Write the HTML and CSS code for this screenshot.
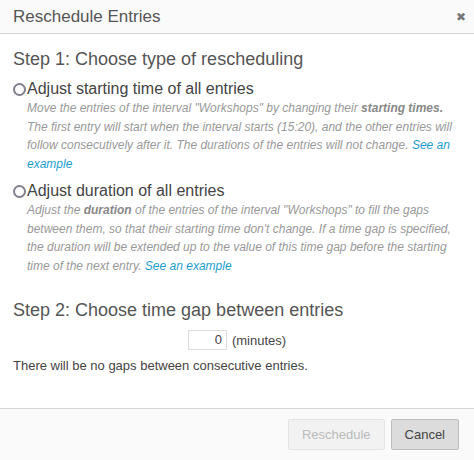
FILE: index.html
```html
<!DOCTYPE html>
<html>
<head>
<meta charset="utf-8">
<link rel="stylesheet" href="styles.css">
</head>
<body>
<div class="dialog">
  <div class="header">
    <span class="title">Reschedule Entries</span>
    <span class="close">✖</span>
  </div>
  <div class="content">
    <h2 class="step">Step 1: Choose type of rescheduling</h2>
    <div class="option">
      <label class="opt-label"><span class="radio"></span>Adjust starting time of all entries</label>
      <div class="desc">Move the entries of the interval "Workshops" by changing their <strong>starting times.</strong> The first entry will start when the interval starts (15:20), and the other entries will follow consecutively after it. The durations of the entries will not change. <a href="#">See an example</a></div>
    </div>
    <div class="option">
      <label class="opt-label"><span class="radio"></span>Adjust duration of all entries</label>
      <div class="desc">Adjust the <strong>duration</strong> of the entries of the interval "Workshops" to fill the gaps between them, so that their starting time don't change. If a time gap is specified, the duration will be extended up to the value of this time gap before the starting time of the next entry. <a href="#">See an example</a></div>
    </div>
    <h2 class="step step2">Step 2: Choose time gap between entries</h2>
    <div class="gap-row">
      <span class="gap-input">0</span>
      <span class="unit">(minutes)</span>
    </div>
    <p class="note">There will be no gaps between consecutive entries.</p>
  </div>
  <div class="footer">
    <button class="btn btn-disabled">Reschedule</button>
    <button class="btn btn-cancel">Cancel</button>
  </div>
</div>
</body>
</html>
```
FILE: styles.css
```css
html, body {
  margin: 0;
  padding: 0;
  background: #fff;
}
body {
  font-family: "Liberation Sans", Arial, sans-serif;
  color: #444;
}
.dialog {
  width: 474px;
  height: 460px;
  display: flex;
  flex-direction: column;
}
.header {
  height: 34px;
  box-sizing: border-box;
  border-bottom: 1px solid #d4d4d4;
  background: #fafafa;
  display: flex;
  align-items: center;
  justify-content: space-between;
  padding: 0 8px 0 13px;
}
.title {
  font-size: 17px;
  color: #555;
}
.close {
  font-size: 12px;
  color: #777;
}
.content {
  flex: 1;
  padding: 14px 13px 0 13px;
}
.step {
  font-size: 18px;
  font-weight: normal;
  color: #555;
  margin: 0 0 9px 0;
  line-height: 22px;
}
.step2 {
  margin-top: 24px;
}
.option {
  margin-bottom: 8px;
}
.opt-label {
  display: flex;
  align-items: center;
  font-size: 16px;
  color: #444;
  line-height: 20px;
}
.radio {
  width: 9px;
  height: 9px;
  border: 2px solid #80808e;
  border-radius: 50%;
  box-sizing: content-box;
  margin-right: 1px;
  display: inline-block;
}
.desc {
  padding-left: 14px;
  font-size: 12px;
  font-style: italic;
  color: #999;
  line-height: 18.5px;
}
.desc strong {
  color: #888;
}
.desc a {
  color: #1a9dd0;
  text-decoration: none;
}
.gap-row {
  display: flex;
  justify-content: center;
  align-items: center;
  gap: 5px;
  margin-top: 7px;
}
.gap-input {
  width: 39px;
  height: 20px;
  box-sizing: border-box;
  border: 1px solid #ddd;
  text-align: right;
  padding-right: 4px;
  font-size: 13px;
  line-height: 18px;
  color: #444;
}
.unit {
  font-size: 13px;
  color: #444;
}
.note {
  margin: 8px 0 0 0;
  font-size: 13px;
  color: #444;
  line-height: 16px;
}
.footer {
  height: 52px;
  box-sizing: border-box;
  border-top: 1px solid #d4d4d4;
  background: #fafafa;
  display: flex;
  justify-content: flex-end;
  align-items: center;
  gap: 6px;
  padding: 0 15px 0 0;
}
.btn {
  height: 31px;
  font-family: "Liberation Sans", Arial, sans-serif;
  font-size: 13px;
  border-radius: 2px;
  padding: 0 13px;
}
.btn-disabled {
  background: #f2f2f2;
  border: 1px solid #e4e4e4;
  color: #bbb;
}
.btn-cancel {
  background: #dcdcdc;
  border: 1px solid #bdbdbd;
  color: #444;
}
```
